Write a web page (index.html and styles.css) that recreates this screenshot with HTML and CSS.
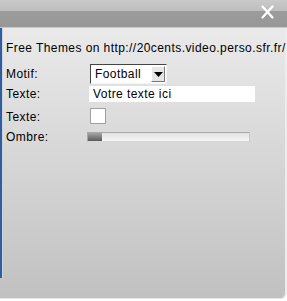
FILE: index.html
```html
<!DOCTYPE html>
<html>
<head>
<meta charset="utf-8">
<link rel="stylesheet" href="styles.css">
</head>
<body>
<div class="panel">
  <div class="header">
    <div class="header-top"></div>
    <div class="header-bottom">
      <svg class="close" width="13" height="14" viewBox="0 0 13 14"><path d="M1.5 1.5 L11.5 12.5 M11.5 1.5 L1.5 12.5" stroke="#fff" stroke-width="2.3" stroke-linecap="round"/></svg>
    </div>
  </div>
  <div class="body">
    <div class="title">Free Themes on http://20cents.video.perso.sfr.fr/</div>
    <div class="form">
      <div class="label l1">Motif:</div>
      <div class="cell">
        <div class="select">
          <span class="select-text">Football</span>
          <span class="select-btn"><svg width="9" height="5" viewBox="0 0 9 5"><path d="M0 0 H9 L4.5 5 Z" fill="#000"/></svg></span>
        </div>
      </div>
      <div class="label l2">Texte:</div>
      <div class="cell"><div class="input">Votre texte ici</div></div>
      <div class="label l3">Texte:</div>
      <div class="cell"><div class="swatch"></div></div>
      <div class="label l4">Ombre:</div>
      <div class="cell"><div class="slider"><div class="thumb"></div></div></div>
    </div>
  </div>
</div>
</body>
</html>
```
FILE: styles.css
```css
html, body { margin: 0; padding: 0; background: #fff; }
body { width: 287px; height: 301px; overflow: hidden; font-family: "Liberation Sans", Arial, sans-serif; font-size: 12px; letter-spacing: 0.43px; color: #000; }
.panel { width: 287px; height: 299px; display: flex; flex-direction: column; }
.header { height: 28px; display: flex; flex-direction: column; }
.header-top { height: 11px; background: linear-gradient(#cacaca, #bdbdbd); }
.header-bottom { height: 16px; background: linear-gradient(#9c9c9c, #979797); border-bottom: 1px solid #c8c8c8; display: flex; justify-content: flex-end; align-items: flex-start; }
.close { margin-top: -6px; margin-right: 13px; }
.body {
  flex: 1;
  background:
    linear-gradient(to right, #2f5d9e 2px, #cfd4da 2px, #cfd4da 3px, transparent 3px) no-repeat 0 0 / 4px 250px,
    linear-gradient(#eaeaea, #c1c1c1);
  border-right: 2px solid #ededed;
  border-bottom: 1px solid #e6e6e6;
  border-bottom-right-radius: 6px;
  padding: 13px 0 0 6px;
}
.title { white-space: nowrap; line-height: 14px; }
.form { display: grid; grid-template-columns: 84px 1fr; grid-template-rows: 21px 18px 25px 14px; margin-top: 9px; }
.label { line-height: 14px; }
.l1 { padding-top: 3px; }
.l2 { padding-top: 2px; }
.l3 { padding-top: 7px; }
.l4 { padding-top: 2px; }
.select { width: 77px; height: 20px; box-sizing: border-box; border: 1px solid #f4f4f4; border-top-color: #444; border-left-color: #444; background: #fff; display: flex; justify-content: space-between; align-items: center; }
.select-text { padding-left: 4px; line-height: 14px; }
.select-btn { width: 14px; height: 16px; box-sizing: border-box; background: #e6e6e6; border: 1px solid #7a7a7a; border-top-color: #fff; border-left-color: #fff; display: flex; align-items: center; justify-content: center; margin-right: 1px; }
.input { width: 166px; height: 16px; background: #fff; line-height: 16px; padding-left: 4px; box-sizing: border-box; margin-top: 1px; margin-left: -1px; }
.swatch { width: 16px; height: 16px; box-sizing: border-box; background: #fff; border: 1px solid #a0a0a0; margin-top: 5px; }
.slider { width: 163px; height: 10px; box-sizing: border-box; border: 1px solid #a8a8a8; border-bottom-color: #d8d8d8; border-right-color: #c8c8c8; background: linear-gradient(#e2e2e2, #f6f6f6); margin-top: 4px; margin-left: -3px; display: flex; }
.thumb { width: 14px; height: 8px; background: linear-gradient(#a5a5a5, #5a5a5a); }
```
